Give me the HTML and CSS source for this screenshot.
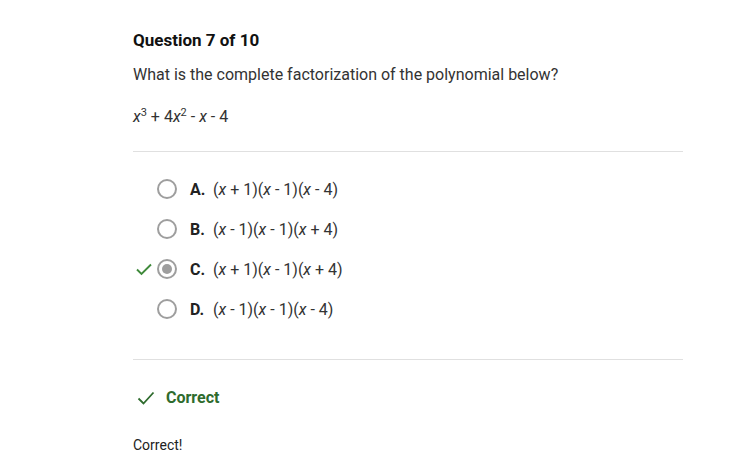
FILE: index.html
```html
<!DOCTYPE html>
<html>
<head>
<meta charset="utf-8">
<link rel="stylesheet" href="styles.css">
</head>
<body>
<div class="page">
  <h1 class="title">Question 7 of 10</h1>
  <p class="prompt">What is the complete factorization of the polynomial below?</p>
  <p class="poly"><i>x</i><sup>3</sup> + 4<i>x</i><sup>2</sup> - <i>x</i> - 4</p>
  <hr class="rule">
  <div class="options">
    <div class="option">
      <span class="mark"></span>
      <span class="radio"></span>
      <span class="letter">A.</span>
      <span class="expr">(<i>x</i> + 1)(<i>x</i> - 1)(<i>x</i> - 4)</span>
    </div>
    <div class="option">
      <span class="mark"></span>
      <span class="radio"></span>
      <span class="letter">B.</span>
      <span class="expr">(<i>x</i> - 1)(<i>x</i> - 1)(<i>x</i> + 4)</span>
    </div>
    <div class="option">
      <span class="mark"><svg width="16" height="13" viewBox="0 0 16 13"><path d="M1 6.5 L5.5 11 L15 1.5" fill="none" stroke="#3f8a3b" stroke-width="1.9"/></svg></span>
      <span class="radio checked"></span>
      <span class="letter">C.</span>
      <span class="expr">(<i>x</i> + 1)(<i>x</i> - 1)(<i>x</i> + 4)</span>
    </div>
    <div class="option">
      <span class="mark"></span>
      <span class="radio"></span>
      <span class="letter">D.</span>
      <span class="expr">(<i>x</i> - 1)(<i>x</i> - 1)(<i>x</i> - 4)</span>
    </div>
  </div>
  <hr class="rule rule2">
  <div class="result">
    <svg width="18" height="14" viewBox="0 0 18 14"><path d="M1.5 7.5 L6.5 12.5 L16.5 1.5" fill="none" stroke="#2e6b2d" stroke-width="1.8"/></svg>
    <span>Correct</span>
  </div>
  <p class="feedback">Correct!</p>
</div>
</body>
</html>
```

FILE: styles.css
```css
html, body {
  margin: 0;
  padding: 0;
  background: #fff;
}
body {
  font-family: Roboto, "Liberation Sans", sans-serif;
  color: #222;
}
.page {
  width: 550px;
  margin-left: 133px;
  padding-top: 30px;
}
.title {
  margin: 0;
  font-size: 17px;
  font-weight: 700;
  line-height: 20px;
  color: #111;
}
.prompt {
  margin: 15px 0 0;
  font-size: 16px;
  line-height: 20px;
  color: #333;
}
.poly {
  margin: 22px 0 0;
  font-size: 16px;
  line-height: 20px;
  color: #333;
}
.poly sup {
  font-size: 11px;
  line-height: 0;
}
.rule {
  margin: 24px 0 0;
  border: 0;
  border-top: 1px solid #e0e0e0;
  height: 0;
}
.options {
  padding-top: 27px;
  display: flex;
  flex-direction: column;
  gap: 20px;
}
.option {
  display: flex;
  align-items: center;
  height: 20px;
  font-size: 16px;
  color: #333;
}
.mark {
  width: 24px;
  display: flex;
  align-items: center;
  padding-left: 3px;
  box-sizing: border-box;
  flex: none;
}
.radio {
  width: 20px;
  height: 20px;
  border: 2px solid #9e9e9e;
  border-radius: 50%;
  box-sizing: border-box;
  margin-right: 13px;
  position: relative;
  flex: none;
}
.radio.checked::after {
  content: "";
  position: absolute;
  left: 3px;
  top: 3px;
  width: 10px;
  height: 10px;
  border-radius: 50%;
  background: #9e9e9e;
}
.letter {
  font-weight: 700;
  width: 23px;
  color: #222;
}
.expr {
  color: #333;
}
.rule2 {
  margin-top: 40px;
}
.result {
  display: flex;
  align-items: center;
  gap: 11px;
  margin-top: 28px;
  padding-left: 4px;
  font-size: 16px;
  font-weight: 700;
  color: #2e6b2d;
}
.feedback {
  margin: 29px 0 0;
  font-size: 14px;
  line-height: 18px;
  color: #222;
}
```
